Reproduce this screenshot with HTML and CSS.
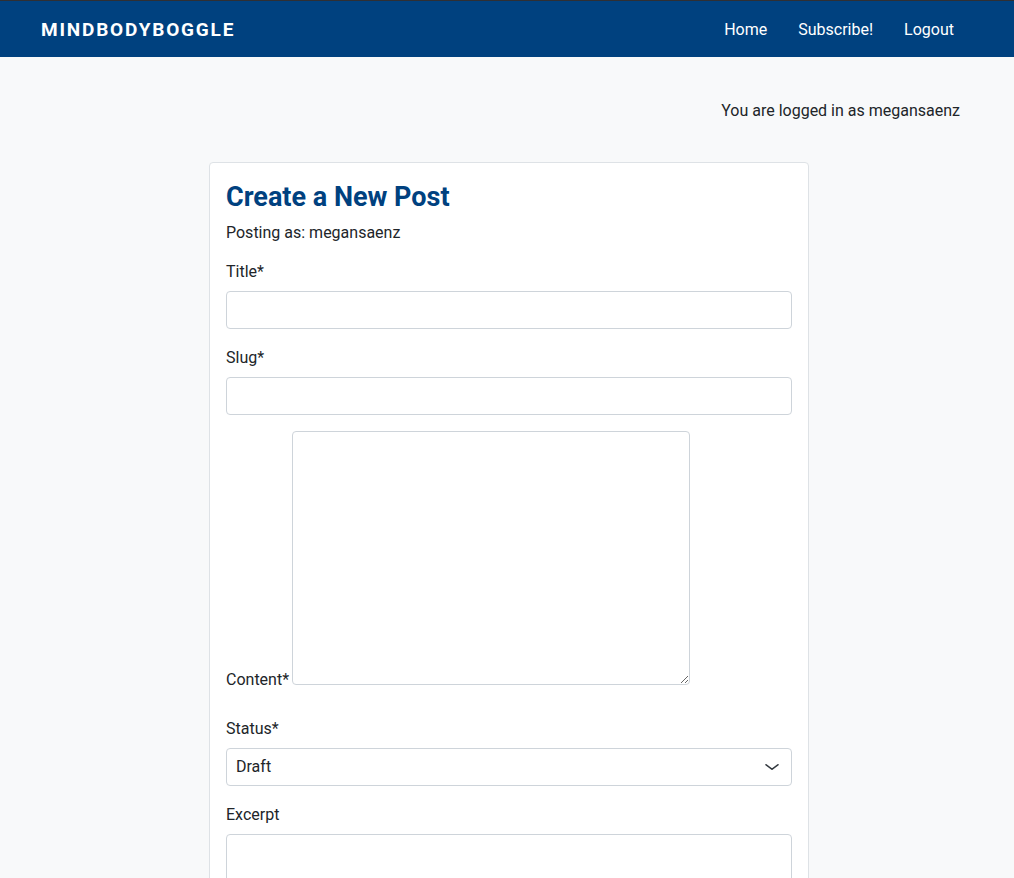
FILE: index.html
```html
<!DOCTYPE html>
<html lang="en">
<head>
<meta charset="utf-8">
<title>Create a New Post</title>
<link rel="stylesheet" href="styles.css">
</head>
<body>
<nav class="navbar">
  <a class="brand" href="#">MINDBODYBOGGLE</a>
  <ul class="nav-links">
    <li><a href="#">Home</a></li>
    <li><a href="#">Subscribe!</a></li>
    <li><a href="#">Logout</a></li>
  </ul>
</nav>
<main class="main">
  <p class="login-status">You are logged in as megansaenz</p>
  <div class="card-wrap">
    <section class="card">
      <h3 class="card-title">Create a New Post</h3>
      <p class="posting-as">Posting as: megansaenz</p>
      <form class="post-form">
        <div class="field">
          <label class="field-label" for="title">Title*</label>
          <input class="field-input" id="title" type="text">
        </div>
        <div class="field">
          <label class="field-label" for="slug">Slug*</label>
          <input class="field-input" id="slug" type="text">
        </div>
        <div class="field field-content">
          <label class="content-label" for="content">Content*</label>
          <textarea class="content-area" id="content"></textarea>
        </div>
        <div class="field">
          <label class="field-label" for="status">Status*</label>
          <div class="select-wrap">
            <select class="field-select" id="status">
              <option>Draft</option>
              <option>Published</option>
            </select>
            <svg class="chevron" viewBox="0 0 16 16" width="16" height="12" preserveAspectRatio="none"><path d="M2 5l6 6 6-6" fill="none" stroke="#343a40" stroke-width="1.7" stroke-linecap="round" stroke-linejoin="round"/></svg>
          </div>
        </div>
        <div class="field">
          <label class="field-label" for="excerpt">Excerpt</label>
          <textarea class="excerpt-area" id="excerpt"></textarea>
        </div>
      </form>
    </section>
  </div>
</main>
</body>
</html>
```

FILE: styles.css
```css
* { box-sizing: border-box; }
html, body { margin: 0; padding: 0; }
body {
  font-family: Roboto, "Liberation Sans", Arial, sans-serif;
  font-size: 16px;
  line-height: 24px;
  color: #212529;
  background: #f8f9fa;
  height: 878px;
  overflow: hidden;
}
.navbar {
  height: 57px;
  background: #00417f;
  border-top: 1px solid #2f2f33;
  display: flex;
  align-items: center;
  justify-content: space-between;
  padding: 2px 60px 0 41px;
}
.brand {
  color: #fff;
  text-decoration: none;
  font-weight: 700;
  font-size: 19px;
  letter-spacing: 1.8px;
}
.nav-links {
  list-style: none;
  margin: 0;
  padding: 0;
  display: flex;
  gap: 31px;
}
.nav-links a {
  color: #fff;
  text-decoration: none;
  font-size: 16px;
}
.main {
  padding-top: 42px;
}
.login-status {
  margin: 0 54px 39px 0;
  text-align: right;
}
.card-wrap {
  display: flex;
  justify-content: center;
  padding-left: 4px;
}
.card {
  width: 600px;
  background: #fff;
  border: 1px solid #dee2e6;
  border-radius: 4px;
  padding: 18px 16px 40px;
}
.card-title {
  margin: 0 0 8px;
  font-size: 27px;
  line-height: 32px;
  font-weight: 700;
  color: #00417f;
}
.posting-as {
  margin: 0 0 14px;
}
.post-form { margin: 0; }
.field {
  margin-bottom: 16px;
}
.field-label {
  display: block;
  padding-top: 1px;
  margin-bottom: 7px;
}
.field-input {
  display: block;
  width: 100%;
  height: 38px;
  border: 1px solid #ced4da;
  border-radius: 4px;
  padding: 6px 12px;
  font: inherit;
  background: #fff;
}
.field-content {
  display: flex;
  align-items: flex-end;
  gap: 3px;
  margin-bottom: 31px;
}
.content-label {
  margin-bottom: -7px;
}
.content-area {
  width: 398px;
  height: 254px;
  border: 1px solid #ced4da;
  border-radius: 4px;
  font: inherit;
  padding: 6px 12px;
  margin: 0;
}
.select-wrap {
  position: relative;
}
.field-select {
  display: block;
  width: 100%;
  height: 38px;
  border: 1px solid #ced4da;
  border-radius: 4px;
  padding: 6px 36px 6px 9px;
  font: inherit;
  color: #212529;
  background: #fff;
  appearance: none;
  -webkit-appearance: none;
}
.chevron {
  position: absolute;
  right: 12px;
  top: 13px;
  pointer-events: none;
}
.excerpt-area {
  display: block;
  width: 100%;
  height: 80px;
  border: 1px solid #ced4da;
  border-radius: 4px;
  font: inherit;
  padding: 6px 12px;
}
```
